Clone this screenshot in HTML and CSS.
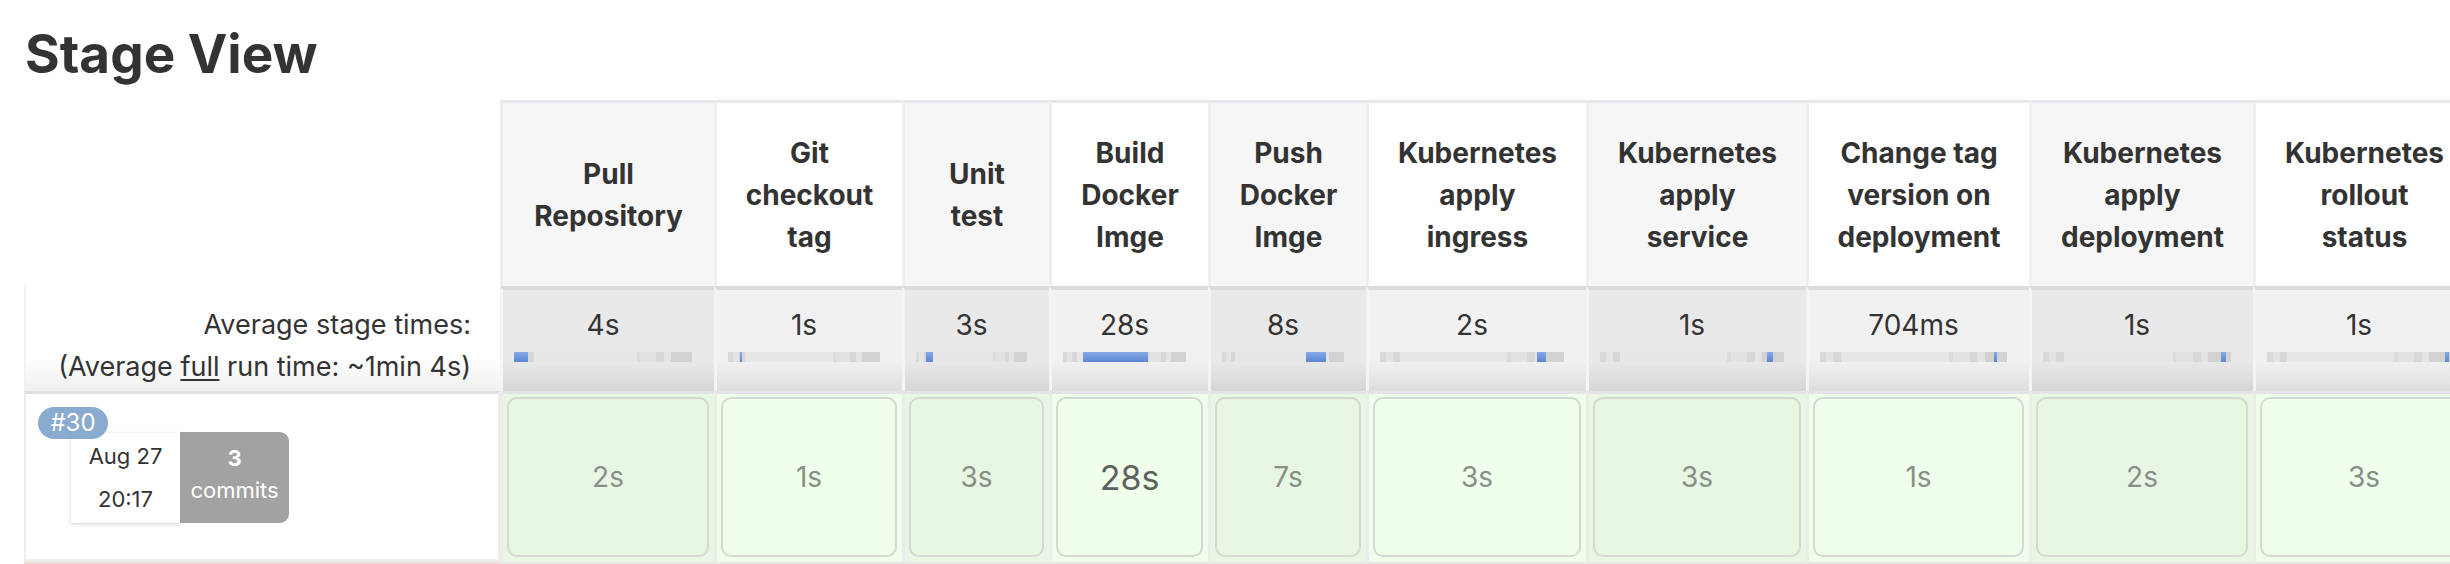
FILE: index.html
```html
<!DOCTYPE html>
<html lang="en">
<head>
<meta charset="utf-8">
<title>Stage View</title>
<link rel="stylesheet" href="styles.css">
</head>
<body>
<h2 class="title">Stage View</h2>
<div class="table">
  <div class="row head">
    <div class="lead blank"></div>
    <div class="stage odd">Pull<br>Repository</div>
    <div class="stage">Git<br>checkout<br>tag</div>
    <div class="stage odd">Unit<br>test</div>
    <div class="stage">Build<br>Docker<br>Imge</div>
    <div class="stage odd">Push<br>Docker<br>Imge</div>
    <div class="stage">Kubernetes<br>apply<br>ingress</div>
    <div class="stage odd">Kubernetes<br>apply<br>service</div>
    <div class="stage">Change tag<br>version on<br>deployment</div>
    <div class="stage odd">Kubernetes<br>apply<br>deployment</div>
    <div class="stage">Kubernetes<br>rollout<br>status</div>
  </div>
  <div class="row avg">
    <div class="lead avg-label">Average stage times:<br>(Average <u>full</u> run time: ~1min 4s)</div>
    <div class="cell odd"><div class="time">4s</div><div class="bar"><span class="fill" style="margin-left:0%;width:8%"></span></div></div>
    <div class="cell"><div class="time">1s</div><div class="bar"><span class="fill" style="margin-left:7.8%;width:1.5%"></span></div></div>
    <div class="cell odd"><div class="time">3s</div><div class="bar"><span class="fill" style="margin-left:8.6%;width:7%"></span></div></div>
    <div class="cell"><div class="time">28s</div><div class="bar"><span class="fill" style="margin-left:16%;width:53%"></span></div></div>
    <div class="cell odd"><div class="time">8s</div><div class="bar"><span class="fill" style="margin-left:69%;width:16%"></span></div></div>
    <div class="cell"><div class="time">2s</div><div class="bar"><span class="fill" style="margin-left:85.4%;width:5%"></span></div></div>
    <div class="cell odd"><div class="time">1s</div><div class="bar"><span class="fill" style="margin-left:90.8%;width:3.2%"></span></div></div>
    <div class="cell"><div class="time">704ms</div><div class="bar"><span class="fill" style="margin-left:93%;width:1.6%"></span></div></div>
    <div class="cell odd"><div class="time">1s</div><div class="bar"><span class="fill" style="margin-left:94.7%;width:2.6%"></span></div></div>
    <div class="cell"><div class="time">1s</div><div class="bar"><span class="fill" style="margin-left:97%;width:2%"></span></div></div>
  </div>
  <div class="row run">
    <div class="lead run-info">
      <span class="badge">#30</span>
      <div class="when">
        <div class="date">Aug 27<br>20:17</div>
        <div class="commits"><b>3</b><span>commits</span></div>
      </div>
    </div>
    <div class="cell odd"><div class="box">2s</div></div>
    <div class="cell"><div class="box">1s</div></div>
    <div class="cell odd"><div class="box">3s</div></div>
    <div class="cell"><div class="box long">28s</div></div>
    <div class="cell odd"><div class="box">7s</div></div>
    <div class="cell"><div class="box">3s</div></div>
    <div class="cell odd"><div class="box">3s</div></div>
    <div class="cell"><div class="box">1s</div></div>
    <div class="cell odd"><div class="box">2s</div></div>
    <div class="cell"><div class="box">3s</div></div>
  </div>
  <div class="row next">
    <div class="lead"></div>
    <div class="cell"></div><div class="cell"></div><div class="cell"></div><div class="cell"></div><div class="cell"></div>
    <div class="cell"></div><div class="cell"></div><div class="cell"></div><div class="cell"></div><div class="cell"></div>
  </div>
</div>
</body>
</html>
```

FILE: styles.css
```css
* {
  box-sizing: border-box;
}

html,
body {
  margin: 0;
  padding: 0;
  background: #ffffff;
}

body {
  width: 2450px;
  height: 564px;
  overflow: hidden;
  font-family: Inter, "Liberation Sans", sans-serif;
  color: #333333;
}

.title {
  margin: 0;
  padding: 22px 0 0 25px;
  font-size: 53px;
  line-height: 64px;
  font-weight: 700;
  color: #333333;
}

.table {
  margin: 14px 0 0 24px;
  width: 2480px;
}

.row {
  display: grid;
  grid-template-columns: 476px 214px 188px 147px 159px 158px 220px 220px 223px 224px 220px;
}

/* header */
.head {
  height: 186px;
}

.lead.blank {
  background: #ffffff;
}

.stage {
  display: flex;
  align-items: center;
  justify-content: center;
  text-align: center;
  border-top: 3px solid #e5e9ed;
  border-left: 3px solid #efefef;
  background: #ffffff;
  font-size: 28px;
  line-height: 42px;
  font-weight: 700;
  color: #333333;
}

.stage.odd {
  background: #f6f6f6;
}

/* average row */
.avg {
  height: 105px;
}

.avg-label {
  padding: 18px 29px 0 0;
  text-align: right;
  font-size: 27px;
  line-height: 42px;
  border-left: 2px solid #f2f2f2;
  background: linear-gradient(to bottom, #ffffff 68%, #efefef 100%);
}

.avg-label u {
  text-decoration-thickness: 2px;
  text-underline-offset: 3px;
}

.avg .cell {
  border-top: 4px solid #dcdcdc;
  border-left: 3px solid #f4f4f4;
  padding: 14px 22px 0 11px;
  background: linear-gradient(to bottom, #f1f1f1 70%, #dedede 100%);
}

.avg .cell.odd {
  background: linear-gradient(to bottom, #e9e9e9 70%, #d6d6d6 100%);
}

.time {
  text-align: center;
  font-size: 28px;
  line-height: 42px;
  color: #333333;
}

.bar {
  display: flex;
  height: 10px;
  margin-top: 6px;
  background: linear-gradient(to right,
      #d9d9d9 0 3%, #e3e3e3 3% 7%, #d7d7d7 7% 11%, #e6e6e6 11% 69%,
      #dbdbdb 69% 71%, #e2e2e2 71% 80%, #d8d8d8 80% 84%, #e4e4e4 84% 88%,
      #d2d2d2 88% 100%);
}

.fill {
  display: block;
  height: 10px;
  min-width: 2px;
  background: linear-gradient(to bottom, #86a9e4, #5b87d3);
}

/* run row */
.run {
  height: 171px;
}

.run-info {
  position: relative;
  border-top: 3px solid #e0e0e0;
  border-left: 2px solid #ededed;
  border-right: 2px solid #ededed;
  border-bottom: 3px solid #ededed;
  padding: 38px 0 0 45px;
  background: #ffffff;
}

.badge {
  position: absolute;
  left: 12px;
  top: 13px;
  z-index: 2;
  width: 70px;
  height: 32px;
  border-radius: 16px;
  background: #8aabd0;
  color: #ffffff;
  font-size: 24px;
  line-height: 32px;
  text-align: center;
}

.when {
  display: flex;
}

.date {
  width: 109px;
  height: 90px;
  padding-top: 2px;
  margin-top: 1px;
  background: #ffffff;
  box-shadow: 0 1px 4px rgba(0, 0, 0, 0.18);
  text-align: center;
  font-size: 22px;
  line-height: 43px;
  color: #333333;
}

.commits {
  display: flex;
  flex-direction: column;
  align-items: center;
  width: 109px;
  height: 91px;
  padding-top: 10px;
  border-radius: 0 9px 9px 0;
  background: #a2a2a2;
  color: #ffffff;
  font-size: 22px;
  line-height: 32px;
}

.commits b {
  font-weight: 700;
}

.run .cell {
  border-top: 3px solid #e4e4e4;
  border-left: 3px solid #ececec;
  padding: 3px 5px 5px 4px;
  background: #f0ffeb;
}

.run .cell.odd {
  background: #e8f7e3;
}

.box {
  height: 100%;
  display: flex;
  align-items: center;
  justify-content: center;
  border: 2px solid #d4d9d4;
  border-radius: 10px;
  font-size: 28px;
  color: #879087;
}

.box.long {
  font-size: 34px;
  color: #5c625c;
}

/* next row (cut off) */
.next {
  height: 30px;
}

.next .lead {
  border-top: 2px solid #f5d9d9;
  background: #fdeeee;
}

.next .cell {
  border-top: 2px solid #e6e6e6;
  border-left: 3px solid #ececec;
  background: #f4f4f4;
}
```
